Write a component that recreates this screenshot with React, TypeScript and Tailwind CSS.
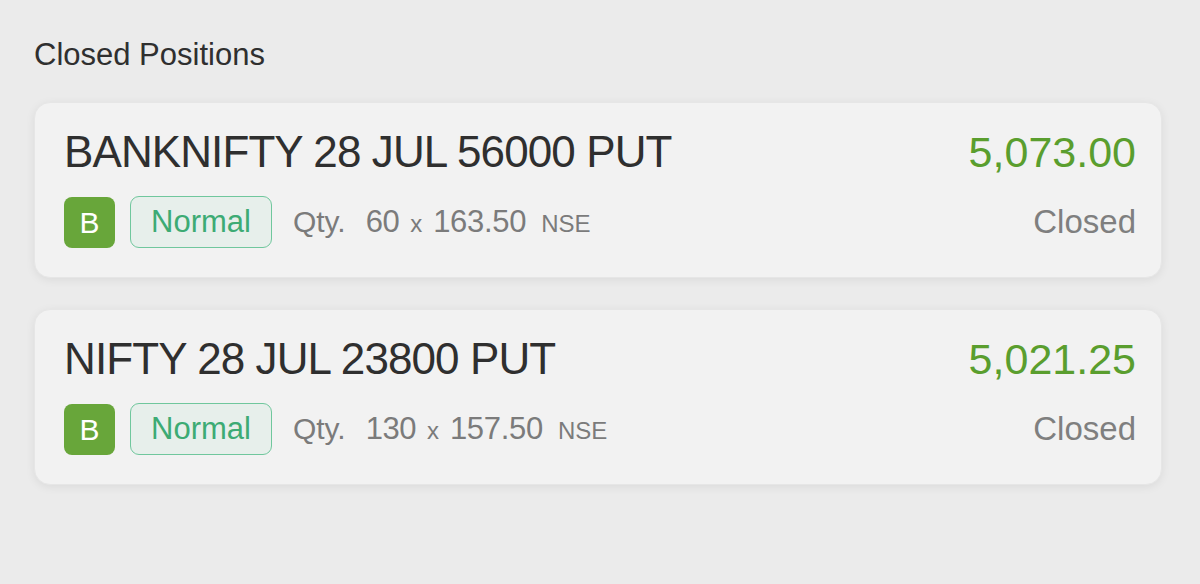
type Position = {
  symbol: string;
  pnl: string;
  qty: string;
  price: string;
};

const positions: Position[] = [
  { symbol: 'BANKNIFTY 28 JUL 56000 PUT', pnl: '5,073.00', qty: '60', price: '163.50' },
  { symbol: 'NIFTY 28 JUL 23800 PUT', pnl: '5,021.25', qty: '130', price: '157.50' },
];

function PositionCard({ p }: { p: Position }) {
  return (
    <div className="rounded-[16px] border border-[#e6e6e6] bg-[#f2f2f2] pl-[29px] pr-[25px] pt-[22px] pb-[29px] shadow-[0_2px_10px_rgba(0,0,0,0.07)]">
      <div className="flex items-baseline justify-between">
        <span className="text-[44px] leading-[53px] tracking-[-0.9px] text-[#2f2f2f]">{p.symbol}</span>
        <span className="text-[43px] leading-[53px] text-[#5a9e2e]">{p.pnl}</span>
      </div>
      <div className="mt-[17px] flex items-center justify-between">
        <div className="flex items-center">
          <div className="flex h-[51px] w-[51px] items-center justify-center rounded-[8px] bg-[#68a63a] text-[30px] text-white">
            B
          </div>
          <div className="ml-[15px] flex h-[52px] items-center rounded-[9px] border-[1.5px] border-[#70c79d] bg-[#e7efeb] px-[20px] text-[31px] text-[#3dab74]">
            Normal
          </div>
          <div className="ml-[21px] flex items-baseline text-[#7b7b7b]">
            <span className="text-[30px]">Qty.</span>
            <span className="ml-[20px] text-[31px] tracking-[-0.5px]">{p.qty}</span>
            <span className="ml-[11px] text-[24px]">x</span>
            <span className="ml-[11px] text-[31px] tracking-[-0.3px]">{p.price}</span>
            <span className="ml-[15px] text-[24px]">NSE</span>
          </div>
        </div>
        <span className="text-[33px] text-[#7f7f7f]">Closed</span>
      </div>
    </div>
  );
}

export default function App() {
  return (
    <div
      className="min-h-[584px] w-full bg-[#ebebeb] px-[34px] pt-[37px]"
      style={{ fontFamily: '"Liberation Sans", Arial, sans-serif' }}
    >
      <h2 className="text-[31px] leading-[36px] text-[#2f2f2f]">Closed Positions</h2>
      <div className="mt-[29px] flex w-[1128px] flex-col gap-[31px]">
        {positions.map((p) => (
          <PositionCard key={p.symbol} p={p} />
        ))}
      </div>
    </div>
  );
}
